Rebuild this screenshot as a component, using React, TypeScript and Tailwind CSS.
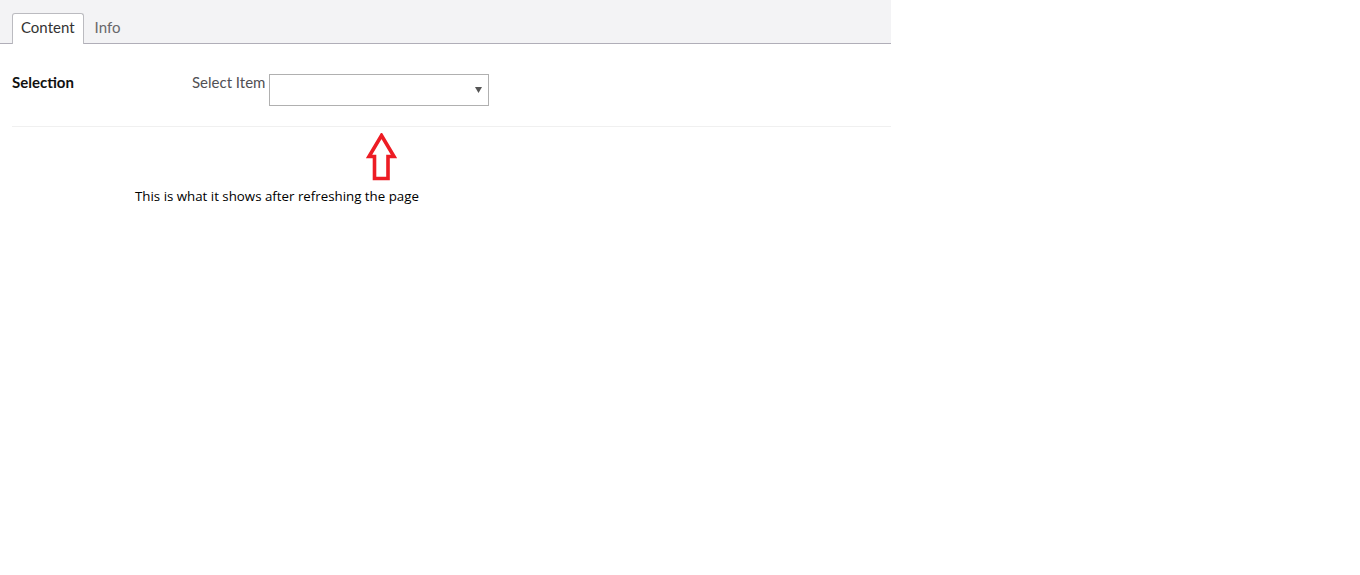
export default function App() {
  return (
    <div className="w-[1360px] h-[575px] bg-white" style={{ fontFamily: "Lato, 'Open Sans', sans-serif" }}>
      <div className="w-[891px]">
        {/* tab header */}
        <div className="h-[44px] bg-[#f3f3f5] border-b border-[#b0aeb8] flex items-end pl-[12px]">
          <div className="h-[31px] mb-[-1px] px-[8px] pb-[3px] flex items-center border border-b-0 border-[#bbbbc0] rounded-t-[3px] bg-white text-[15px] text-[#333333]">
            Content
          </div>
          <div className="h-[31px] pl-[11px] pr-[10px] pb-[1px] flex items-center text-[15px] text-[#68676b]">Info</div>
        </div>

        {/* property row */}
        <div className="ml-[12px] border-b border-[#f0f0f0] h-[83px] flex items-start pt-[30px]">
          <div className="w-[180px] text-[15px] font-bold text-[#111111] leading-[18px] mt-[-1px]">Selection</div>
          <div className="text-[15px] text-[#515054] leading-[18px] mr-[4px] mt-[-1px]">Select Item</div>
          <div className="w-[220px] h-[32px] border border-[#b0b0b0] relative bg-white">
            <svg className="absolute right-[6px] top-[12px]" width="7" height="6" viewBox="0 0 7 6">
              <path d="M0 0 H7 L3.5 6 Z" fill="#555555" />
            </svg>
          </div>
        </div>

        {/* annotation */}
        <div className="relative h-[100px]">
          <svg className="absolute left-[366px] top-[6px]" width="31" height="48" viewBox="0 0 31 48">
            <path
              d="M15.5 2.5 L28 23.5 L22 23.5 L22 45.5 L8.5 45.5 L8.5 23.5 L3 23.5 Z"
              fill="none"
              stroke="#ed1c24"
              strokeWidth="3.6"
              strokeLinejoin="miter"
            />
          </svg>
          <div
            className="absolute left-[135px] top-[61px] text-[13.3px] text-black leading-[16px]"
            style={{ fontFamily: "'Open Sans', sans-serif" }}
          >
            This is what it shows after refreshing the page
          </div>
        </div>
      </div>
    </div>
  )
}
